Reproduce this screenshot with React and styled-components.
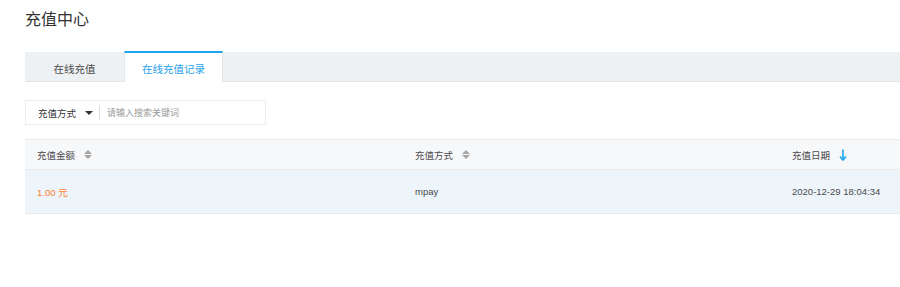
import React, { useState } from 'react';
import styled, { createGlobalStyle } from 'styled-components';

const GlobalStyle = createGlobalStyle`
  html, body {
    margin: 0;
    padding: 0;
    background: #fff;
  }
  body {
    font-family: 'Liberation Sans', 'Noto Sans CJK SC', sans-serif;
    color: #555;
  }
`;

const Page = styled.div`
  padding: 8px 0 0 25px;
`;

const Title = styled.h1`
  margin: 0;
  font-size: 16px;
  line-height: 24px;
  font-weight: normal;
  color: #333;
`;

const TabBar = styled.div`
  display: flex;
  margin-top: 20px;
  height: 29px;
  background: #eef1f4;
  border-bottom: 1px solid #e3e6e9;
`;

const Tab = styled.div`
  width: 99px;
  box-sizing: border-box;
  display: flex;
  align-items: center;
  justify-content: center;
  font-size: 10.5px;
  cursor: pointer;
  color: ${(p) => (p.$active ? '#1ea1ea' : '#4a4a4a')};
  background: ${(p) => (p.$active ? '#fff' : 'transparent')};
  border-top: 2px solid ${(p) => (p.$active ? '#1aa5f0' : 'transparent')};
  border-left: 1px solid ${(p) => (p.$active ? '#e3e6e9' : 'transparent')};
  border-right: 1px solid ${(p) => (p.$active ? '#e3e6e9' : 'transparent')};
  margin-top: -1px;
  height: 31px;
  padding-top: 1px;
`;

const SearchBox = styled.div`
  display: flex;
  align-items: center;
  width: 241px;
  height: 25px;
  box-sizing: border-box;
  margin-top: 18px;
  border: 1px solid #ececec;
`;

const Select = styled.div`
  display: flex;
  align-items: center;
  padding-left: 12px;
  width: 73px;
  box-sizing: border-box;
  font-size: 9.5px;
  color: #333;
`;

const Caret = styled.span`
  margin-left: 9px;
  width: 0;
  height: 0;
  border-left: 4px solid transparent;
  border-right: 4px solid transparent;
  border-top: 4px solid #333;
`;

const Divider = styled.span`
  width: 1px;
  height: 15px;
  background: #ddd;
`;

const Input = styled.input`
  flex: 1;
  border: none;
  outline: none;
  padding: 0 0 0 7px;
  font-family: inherit;
  font-size: 9px;
  color: #333;
  background: transparent;
  &::placeholder {
    color: #999;
  }
`;

const Table = styled.div`
  margin-top: 14px;
  border-top: 1px solid #e8eaec;
`;

const Row = styled.div`
  display: grid;
  grid-template-columns: 378px 377px 1fr;
  height: ${(p) => (p.$head ? '29px' : '43px')};
  align-items: center;
  background: ${(p) => (p.$head ? '#f7f8fa' : p.$hover ? '#edf5fb' : '#fff')};
  border-bottom: 1px solid #e8eaec;
`;

const Cell = styled.div`
  display: flex;
  align-items: center;
  padding-left: 12px;
  font-size: 9.5px;
  color: ${(p) => p.$color || '#4a4a4a'};
`;

const SortIcon = styled.span`
  display: inline-flex;
  flex-direction: column;
  gap: 1px;
  margin-left: 9px;
  &::before, &::after {
    content: '';
    width: 0;
    height: 0;
    border-left: 4px solid transparent;
    border-right: 4px solid transparent;
  }
  &::before {
    border-bottom: 4px solid #a6a6a6;
  }
  &::after {
    border-top: 4px solid #a6a6a6;
  }
`;

const DownArrow = () => (
  <svg width="8" height="12" viewBox="0 0 8 12" style={{ marginLeft: 9 }}>
    <path d="M4 0.5 V10.5" stroke="#1aa5f0" strokeWidth="1.6" fill="none" />
    <path d="M1 7.5 L4 11 L7 7.5" stroke="#1aa5f0" strokeWidth="1.6" fill="none" />
  </svg>
);

const records = [
  { amount: '1.00 元', method: 'mpay', date: '2020-12-29 18:04:34' },
];

export default function App() {
  const [tab, setTab] = useState(1);
  return (
    <Page>
      <GlobalStyle />
      <Title>充值中心</Title>
      <TabBar>
        <Tab $active={tab === 0} onClick={() => setTab(0)}>在线充值</Tab>
        <Tab $active={tab === 1} onClick={() => setTab(1)}>在线充值记录</Tab>
      </TabBar>
      <SearchBox>
        <Select>
          充值方式
          <Caret />
        </Select>
        <Divider />
        <Input placeholder="请输入搜索关键词" />
      </SearchBox>
      <Table>
        <Row $head>
          <Cell>充值金额<SortIcon /></Cell>
          <Cell>充值方式<SortIcon /></Cell>
          <Cell>充值日期<DownArrow /></Cell>
        </Row>
        {records.map((r) => (
          <Row key={r.date} $hover>
            <Cell $color="#ff7a2f">{r.amount}</Cell>
            <Cell>{r.method}</Cell>
            <Cell>{r.date}</Cell>
          </Row>
        ))}
      </Table>
    </Page>
  );
}
